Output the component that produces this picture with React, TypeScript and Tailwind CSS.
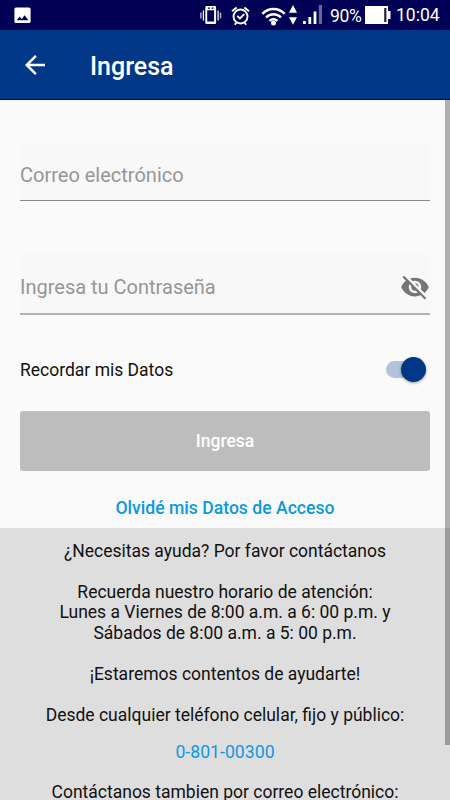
import { useState } from 'react';

function StatusBar() {
  return (
    <div className="flex h-[30px] shrink-0 items-center bg-[#000055] pl-3.5 text-white">
      <svg className="h-[17px] w-[17px]" viewBox="0 0 17 17" fill="currentColor">
        <path
          fillRule="evenodd"
          d="M2 0.5h13a1.6 1.6 0 0 1 1.6 1.6v12.4a1.6 1.6 0 0 1-1.6 1.6H2a1.6 1.6 0 0 1-1.6-1.6V2.1A1.6 1.6 0 0 1 2 .5zM2.7 13.2h11.7l-3.8-5-2.9 3.7-2-2.4z"
        />
      </svg>

      {/* vibrate */}
      <svg className="ml-[169px] h-[20px] w-[22px]" viewBox="0 0 22 20" fill="currentColor">
        <path fillRule="evenodd" d="M6.5 1h8.400a1.200 1.200 0 0 1 1.200 1.200v15.600a1.200 1.200 0 0 1-1.200 1.200H6.500a1.200 1.200 0 0 1-1.200-1.200V2.200A1.200 1.200 0 0 1 6.500 1zm.7 4.200v11.300h6.900V5.200zM8 2.500v1.200h2V2.500zm3.500 0v1.200h2V2.500z" />
        <path d="M2.800 5.500h1.200v10H2.800zM17.500 5.500h1.200v10h-1.200z" />
        <path opacity=".7" d="M.2 7.500h1.400v6H.2zM19.800 7.500h1.400v6h-1.400z" />
      </svg>

      {/* alarm */}
      <svg
        className="mt-px ml-[9px] h-[20px] w-[19px]"
        viewBox="0 0 19 20"
        fill="none"
        stroke="currentColor"
        strokeWidth="1.9"
      >
        <circle cx="9.5" cy="10.5" r="7" />
        <path d="M1 5.200L5.600 1.400M18 5.200l-4.600-3.800M3.800 18.800l1.900-2.500M15.200 18.800l-1.900-2.500" />
        <path d="M6.300 9.800l2.600 2.600 4.400-4.300" />
      </svg>

      {/* wifi */}
      <svg
        className="mt-px ml-[11px] h-[20px] w-[25px]"
        viewBox="0 0 25 20"
        fill="none"
        stroke="currentColor"
        strokeWidth="2.4"
      >
        <path d="M1.300 7.800c6.200-6.500 16.200-6.500 22.400 0" />
        <path d="M5 11.500c4.200-4.300 10.800-4.300 15 0" />
        <path d="M8.500 14.800c2.300-2.200 5.700-2.200 8 0" />
        <circle cx="12.5" cy="17" r="2.5" fill="currentColor" stroke="none" />
      </svg>
      <svg className="ml-[3px] h-[20px] w-[8px]" viewBox="0 0 8 20" fill="currentColor">
        <path d="M4 0l4 7.800H0zM4 19.800l4-7.600H0z" />
      </svg>

      {/* signal */}
      <svg className="ml-[6px] h-[20px] w-[20px]" viewBox="0 0 20 20" fill="currentColor">
        <path d="M0 16h2.800v3H0zM5.400 12h2.800v7H5.400zM10.600 6.500h2.800V19h-2.800z" />
        <path opacity=".4" d="M15.800 0h3.200v19h-3.200z" />
      </svg>

      <span className="ml-[7px] w-[34px] pt-[2px] whitespace-nowrap text-[17.5px] tracking-[-0.3px]">90%</span>
      <svg className="ml-px h-[18px] w-[26px]" viewBox="0 0 26 18">
        <path fill="#fff" d="M0 0h23v5h2.500v8H23v5H0z" />
        <path fill="#20204b" d="M19.200 2h2.200v14h-2.200z" />
      </svg>
      <span className="ml-[5px] pt-px whitespace-nowrap text-[17.5px]">10:04</span>
    </div>
  );
}

function Header() {
  return (
    <header className="flex h-[70px] shrink-0 items-center border-b border-[#000c60] bg-[#003887] pl-5 text-white">
      <button aria-label="Atrás">
        <svg className="h-[30px] w-[30px]" viewBox="0 0 24 24" fill="currentColor">
          <path d="M20 11H7.830l5.590-5.590L12 4l-8 8 8 8 1.410-1.410L7.830 13H20v-2z" />
        </svg>
      </button>
      <h1 className="ml-10 pt-[5px] text-[25px] font-medium">Ingresa</h1>
    </header>
  );
}

export default function App() {
  const [showPassword, setShowPassword] = useState(false);
  const [remember, setRemember] = useState(true);

  return (
    <div className="relative flex h-[800px] w-[450px] flex-col overflow-hidden bg-[#fafafa] font-[Roboto,sans-serif] text-[#111]">
      <StatusBar />
      <Header />

      <form className="flex h-[428px] shrink-0 flex-col px-5 pt-[43px]">
        <input
          type="email"
          placeholder="Correo electrónico"
          className="h-[58px] shrink-0 border-b border-[#8c8c8c] bg-[#f8f8f8] pt-1.5 text-[20px] outline-none placeholder:text-[#969696]"
        />
        <div className="mt-[53px] flex h-[61px] shrink-0 items-center border-b-2 border-[#b3b3b3] bg-[#f8f8f8] pt-[7px]">
          <input
            type={showPassword ? 'text' : 'password'}
            placeholder="Ingresa tu Contraseña"
            className="min-w-0 flex-1 text-[20px] outline-none placeholder:text-[#969696]"
          />
          <button type="button" aria-label="Mostrar contraseña" onClick={() => setShowPassword(!showPassword)}>
            <svg className="h-[30px] w-[30px]" viewBox="0 0 24 24" fill="#757575">
              <path d="M12 7c2.760 0 5 2.240 5 5 0 .65-.13 1.260-.36 1.830l2.920 2.920c1.510-1.260 2.700-2.890 3.430-4.750-1.730-4.390-6-7.500-11-7.500-1.400 0-2.740.25-3.980.7l2.160 2.160C10.740 7.130 11.350 7 12 7zM2 4.270l2.280 2.280.46.46C3.080 8.300 1.780 10.020 1 12c1.730 4.390 6 7.500 11 7.500 1.550 0 3.030-.3 4.380-.84l.42.42L19.730 22 21 20.730 3.270 3 2 4.270zM7.530 9.800l1.550 1.550c-.05.21-.08.43-.08.65 0 1.660 1.340 3 3 3 .22 0 .44-.03.65-.08l1.550 1.550c-.67.33-1.410.53-2.200.53-2.760 0-5-2.240-5-5 0-.79.2-1.530.53-2.200zm4.310-.78l3.150 3.150.02-.16c0-1.660-1.340-3-3-3l-.17.01z" />
            </svg>
          </button>
        </div>

        <div className="mt-[38px] flex h-8 shrink-0 items-center justify-between pr-[4px]">
          <span className="pt-[3px] text-[17.5px]">Recordar mis Datos</span>
          <button
            type="button"
            role="switch"
            aria-checked={remember}
            aria-label="Recordar mis Datos"
            onClick={() => setRemember(!remember)}
            className={`flex h-[17px] w-[40px] items-center rounded-full bg-[#b3c3db] ${remember ? 'justify-end' : 'justify-start'}`}
          >
            <span className="h-[25px] w-[25px] rounded-full bg-[#003887] shadow-[0_1px_3px_rgba(0,0,0,0.4)]" />
          </button>
        </div>

        <button type="button" className="mt-[26px] h-[60px] shrink-0 rounded-[3px] bg-[#bdbdbd] pt-px text-[17.5px] font-medium text-white">
          Ingresa
        </button>
        <a href="#" className="mt-[26px] text-center text-[17.6px] leading-[22px] font-medium text-[#0a99dd]">
          Olvidé mis Datos de Acceso
        </a>
      </form>

      <section className="flex h-[272px] shrink-0 flex-col gap-[20.5px] bg-[#dedede] pt-[13px] text-center text-[17.5px] leading-[20.4px]">
        <p>¿Necesitas ayuda? Por favor contáctanos</p>
        <p>
          Recuerda nuestro horario de atención:
          <br />
          Lunes a Viernes de 8:00 a.m. a 6: 00 p.m. y
          <br />
          Sábados de 8:00 a.m. a 5: 00 p.m.
        </p>
        <p>¡Estaremos contentos de ayudarte!</p>
        <p>Desde cualquier teléfono celular, fijo y público:</p>
        <a href="#" className="-mt-[3px] text-[17.7px] text-[#1497e0]">
          0-801-00300
        </a>
        <p className="-mt-px">Contáctanos tambien por correo electrónico:</p>
      </section>

      {/* scrollbar */}
      <div className="absolute top-[100px] right-0 h-[645px] w-[5px] bg-black/30" />
    </div>
  );
}
